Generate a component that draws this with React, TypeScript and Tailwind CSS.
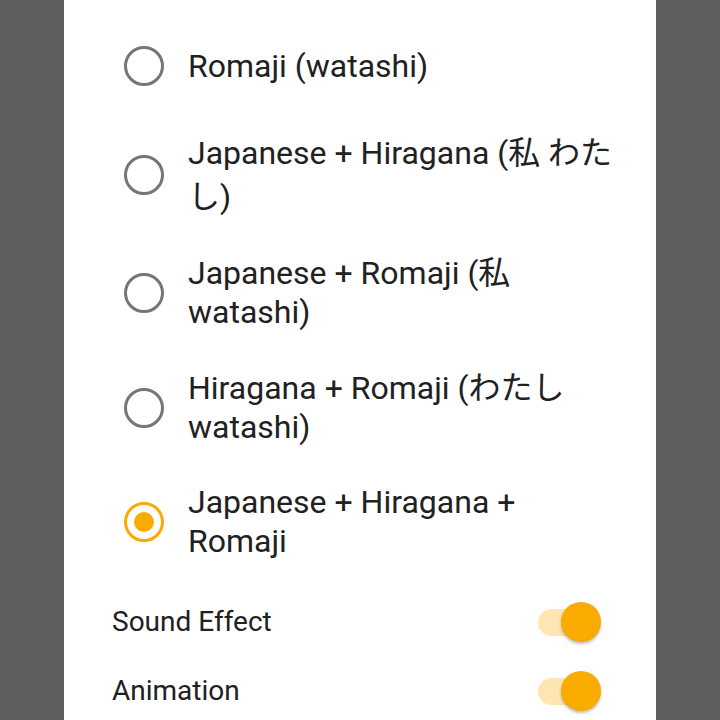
import { useState } from "react"

const font = { fontFamily: '"Roboto", "Noto Sans CJK JP", sans-serif' }

const options = [
  { label: "Romaji (watashi)", cls: "pt-[46px] leading-[39px]" },
  { label: "Japanese + Hiragana (私 わたし)", cls: "pt-[45px] leading-[44px]" },
  { label: "Japanese + Romaji (私 watashi)", cls: "pt-[35px] leading-[39px]" },
  { label: "Hiragana + Romaji (わたし watashi)", cls: "pt-[37px] leading-[39px]" },
  { label: "Japanese + Hiragana + Romaji", cls: "pt-[36px] leading-[39px]" },
]

function Radio({ on }: { on: boolean }) {
  return (
    <span
      className={
        on
          ? "flex size-10 shrink-0 items-center justify-center rounded-full border-[3px] border-[#f9ab00]"
          : "flex size-10 shrink-0 items-center justify-center rounded-full border-[3px] border-[#767676]"
      }
    >
      {on && <span className="size-5 rounded-full bg-[#f9ab00]" />}
    </span>
  )
}

function Toggle() {
  return (
    <span className="relative flex h-10 w-16 items-center">
      <span className="ml-[1px] h-[27px] w-[52px] rounded-full bg-[#fde6b4]" />
      <span className="absolute right-0 top-0 size-10 rounded-full bg-[#f9ab00] shadow-[0_2px_3px_rgba(0,0,0,0.25)]" />
    </span>
  )
}

export default function App() {
  const [picked, setPicked] = useState(4)
  return (
    <div className="flex h-[720px] w-[720px] justify-center overflow-hidden bg-[#5f5f5f]" style={font}>
      <div className="h-full w-[592px] bg-white">
        {options.map((o, i) => (
          <div
            key={o.label}
            className={"flex cursor-pointer items-center gap-6 pl-[60px] pr-[36px] " + o.cls}
            onClick={() => setPicked(i)}
          >
            <Radio on={picked === i} />
            <span className="text-[32px] text-[#212121]">{o.label}</span>
          </div>
        ))}
        <div className="mt-[40px] flex items-center justify-between pl-[48px] pr-[55px]">
          <span className="text-[28px] text-[#212121]">Sound Effect</span>
          <Toggle />
        </div>
        <div className="mt-[27px] flex items-center justify-between pl-[48px] pr-[55px]">
          <span className="text-[28px] text-[#212121]">Animation</span>
          <Toggle />
        </div>
      </div>
    </div>
  )
}
